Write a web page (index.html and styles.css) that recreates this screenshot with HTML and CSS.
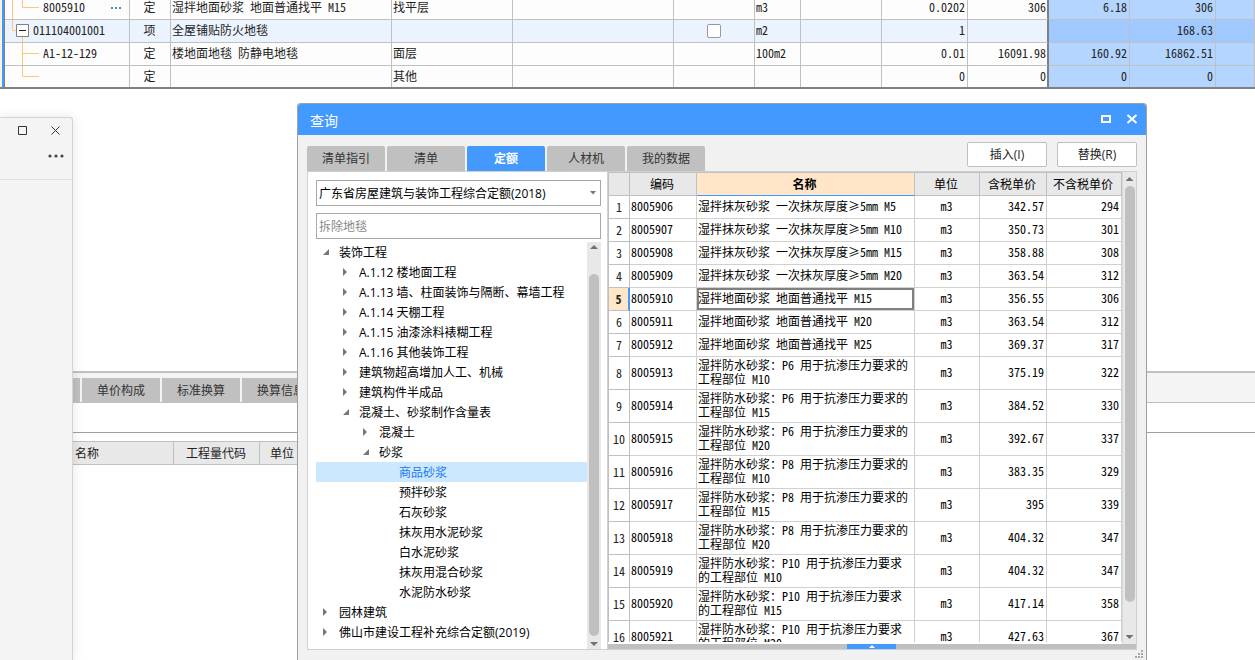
FILE: index.html
```html
<!DOCTYPE html>
<html lang="zh-CN">
<head>
<meta charset="utf-8">
<title>查询</title>
<link rel="stylesheet" href="styles.css">
</head>
<body>
<main class="workspace">
  <section class="bill">
    <div class="bill-gutter"></div>
    <table class="bill-table">
      <colgroup><col class="b-code"><col class="b-kind"><col class="b-name"><col class="b-feature"><col class="b-spec"><col class="b-check"><col class="b-unit"><col class="b-expr"><col class="b-qty"><col class="b-price"><col class="b-cost"><col class="b-total"><col></colgroup>
      <tbody>
        <tr><td><div class="node"><svg class="branch branch-deep" viewBox="0 0 38 23"><path d="M7.5 0V23M17.5 0V10.5H34"/></svg><span>8005910</span><button class="more" aria-label="更多"><svg viewBox="0 0 12 4"><path d="M1 1h2v2H1zM5 1h2v2H5zM9 1h2v2H9z"/></svg></button></div></td><td class="mid">定</td><td>湿拌地面砂浆 地面普通找平 M15</td><td>找平层</td><td></td><td></td><td>m3</td><td></td><td class="num">0.0202</td><td class="num edge">306</td><td class="num hot">6.18</td><td class="num hot">306</td><td class="hot"></td></tr>
        <tr class="active"><td><div class="node"><svg class="branch branch-root" viewBox="0 0 28 23"><path d="M7.5 0V10.5H11M17.5 17V23"/><path class="box" d="M11.5 4.5h12v12h-12z"/><path class="minus" d="M14 10.5h7"/></svg><span>011104001001</span></div></td><td class="mid">项</td><td>全屋铺贴防火地毯</td><td></td><td></td><td class="tick-cell"><input type="checkbox" class="tick" aria-label="全屋铺贴防火地毯"></td><td>m2</td><td></td><td class="num">1</td><td class="edge"></td><td class="hot"></td><td class="num hot">168.63</td><td class="hot"></td></tr>
        <tr><td><div class="node"><svg class="branch branch-deep" viewBox="0 0 38 23"><path d="M17.5 0V23M17.5 10.5H34"/></svg><span>A1-12-129</span></div></td><td class="mid">定</td><td>楼地面地毯 防静电地毯</td><td>面层</td><td></td><td></td><td>100m2</td><td></td><td class="num">0.01</td><td class="num edge">16091.98</td><td class="num hot">160.92</td><td class="num hot">16862.51</td><td class="hot"></td></tr>
        <tr class="last"><td><div class="node"><svg class="branch branch-deep" viewBox="0 0 38 23"><path d="M17.5 0V10.5H34"/></svg></div></td><td class="mid">定</td><td></td><td>其他</td><td></td><td></td><td></td><td></td><td class="num">0</td><td class="num edge">0</td><td class="num hot">0</td><td class="num hot">0</td><td class="hot"></td></tr>
      </tbody>
    </table>
  </section>

  <section class="detail">
    <nav class="detail-tabs"><button>工料机显示</button><button>单价构成</button><button>标准换算</button><button>换算信息</button></nav>
    <div class="detail-bar"></div>
    <table class="detail-table"><thead><tr><th class="d-name">名称</th><th class="d-code">工程量代码</th><th class="d-unit">单位</th></tr></thead></table>
  </section>

  <aside class="side-window">
    <header class="side-head">
      <div class="side-controls">
        <button aria-label="最大化"><svg viewBox="0 0 13 13"><path d="M2.5 2.5h8v8h-8z"/></svg></button>
        <button aria-label="关闭"><svg viewBox="0 0 13 13"><path d="M2.5 2.5l8 8M10.5 2.5l-8 8"/></svg></button>
      </div>
      <button class="side-more" aria-label="菜单"><svg viewBox="0 0 16 4"><circle cx="2" cy="2" r="1.6"/><circle cx="8" cy="2" r="1.6"/><circle cx="14" cy="2" r="1.6"/></svg></button>
    </header>
  </aside>

  <section class="dialog" role="dialog" aria-labelledby="dialog-title">
    <header class="dialog-title">
      <h1 id="dialog-title">查询</h1>
      <button aria-label="最大化"><svg viewBox="0 0 12 12"><path d="M2 2h8v6H2z"/></svg></button>
      <button aria-label="关闭"><svg viewBox="0 0 12 12"><path d="M1.5 1l9 8M10.5 1l-9 8"/></svg></button>
    </header>
    <div class="toolbar">
      <nav class="tabs"><button>清单指引</button><button>清单</button><button class="on">定额</button><button>人材机</button><button>我的数据</button></nav>
      <div class="actions"><button>插入(I)</button><button>替换(R)</button></div>
    </div>
    <div class="panes">
      <div class="library">
        <div class="combo">
          <select aria-label="定额库"><option>广东省房屋建筑与装饰工程综合定额(2018)</option></select>
          <svg viewBox="0 0 6 4"><path d="M0 0h6L3 3.5z"/></svg>
        </div>
        <input class="search" type="text" placeholder="拆除地毯" aria-label="搜索">
        <div class="tree-box">
          <ul class="tree">
            <li class="l0 open">装饰工程</li>
            <li class="l1 shut">A.1.12 楼地面工程</li>
            <li class="l1 shut">A.1.13 墙、柱面装饰与隔断、幕墙工程</li>
            <li class="l1 shut">A.1.14 天棚工程</li>
            <li class="l1 shut">A.1.15 油漆涂料裱糊工程</li>
            <li class="l1 shut">A.1.16 其他装饰工程</li>
            <li class="l1 shut">建筑物超高增加人工、机械</li>
            <li class="l1 shut">建筑构件半成品</li>
            <li class="l1 open">混凝土、砂浆制作含量表</li>
            <li class="l2 shut">混凝土</li>
            <li class="l2 open">砂浆</li>
            <li class="l3 picked">商品砂浆</li>
            <li class="l3">预拌砂浆</li>
            <li class="l3">石灰砂浆</li>
            <li class="l3">抹灰用水泥砂浆</li>
            <li class="l3">白水泥砂浆</li>
            <li class="l3">抹灰用混合砂浆</li>
            <li class="l3">水泥防水砂浆</li>
            <li class="l0 shut">园林建筑</li>
            <li class="l0 shut">佛山市建设工程补充综合定额(2019)</li>
          </ul>
          <div class="scroll tree-scroll"><i class="up"></i><i class="thumb"></i><i class="down"></i></div>
        </div>
      </div>
      <div class="results">
        <div class="results-view">
          <div class="results-clip">
            <table class="grid">
              <colgroup><col class="g-no"><col class="g-code"><col><col class="g-unit"><col class="g-price"><col class="g-net"></colgroup>
              <thead><tr><th></th><th>编码</th><th class="sorted">名称</th><th>单位</th><th>含税单价</th><th>不含税单价</th></tr></thead>
              <tbody>
                <tr><th>1</th><td>8005906</td><td>湿拌抹灰砂浆 一次抹灰厚度<span class="wide">≥</span>5mm M5</td><td>m3</td><td>342.57</td><td>294</td></tr>
                <tr><th>2</th><td>8005907</td><td>湿拌抹灰砂浆 一次抹灰厚度<span class="wide">≥</span>5mm M10</td><td>m3</td><td>350.73</td><td>301</td></tr>
                <tr><th>3</th><td>8005908</td><td>湿拌抹灰砂浆 一次抹灰厚度<span class="wide">≥</span>5mm M15</td><td>m3</td><td>358.88</td><td>308</td></tr>
                <tr><th>4</th><td>8005909</td><td>湿拌抹灰砂浆 一次抹灰厚度<span class="wide">≥</span>5mm M20</td><td>m3</td><td>363.54</td><td>312</td></tr>
                <tr class="current"><th>5</th><td>8005910</td><td>湿拌地面砂浆 地面普通找平 M15</td><td>m3</td><td>356.55</td><td>306</td></tr>
                <tr><th>6</th><td>8005911</td><td>湿拌地面砂浆 地面普通找平 M20</td><td>m3</td><td>363.54</td><td>312</td></tr>
                <tr><th>7</th><td>8005912</td><td>湿拌地面砂浆 地面普通找平 M25</td><td>m3</td><td>369.37</td><td>317</td></tr>
                <tr class="tall"><th>8</th><td>8005913</td><td>湿拌防水砂浆：P6 用于抗渗压力要求的工程部位 M10</td><td>m3</td><td>375.19</td><td>322</td></tr>
                <tr class="tall"><th>9</th><td>8005914</td><td>湿拌防水砂浆：P6 用于抗渗压力要求的工程部位 M15</td><td>m3</td><td>384.52</td><td>330</td></tr>
                <tr class="tall"><th>10</th><td>8005915</td><td>湿拌防水砂浆：P6 用于抗渗压力要求的工程部位 M20</td><td>m3</td><td>392.67</td><td>337</td></tr>
                <tr class="tall"><th>11</th><td>8005916</td><td>湿拌防水砂浆：P8 用于抗渗压力要求的工程部位 M10</td><td>m3</td><td>383.35</td><td>329</td></tr>
                <tr class="tall"><th>12</th><td>8005917</td><td>湿拌防水砂浆：P8 用于抗渗压力要求的工程部位 M15</td><td>m3</td><td>395</td><td>339</td></tr>
                <tr class="tall"><th>13</th><td>8005918</td><td>湿拌防水砂浆：P8 用于抗渗压力要求的工程部位 M20</td><td>m3</td><td>404.32</td><td>347</td></tr>
                <tr class="tall"><th>14</th><td>8005919</td><td>湿拌防水砂浆：P10 用于抗渗压力要求的工程部位 M10</td><td>m3</td><td>404.32</td><td>347</td></tr>
                <tr class="tall"><th>15</th><td>8005920</td><td>湿拌防水砂浆：P10 用于抗渗压力要求的工程部位 M15</td><td>m3</td><td>417.14</td><td>358</td></tr>
                <tr class="tall"><th>16</th><td>8005921</td><td>湿拌防水砂浆：P10 用于抗渗压力要求的工程部位 M20</td><td>m3</td><td>427.63</td><td>367</td></tr>
              </tbody>
            </table>
          </div>
          <div class="scroll grid-scroll"><i class="up"></i><i class="thumb"></i><i class="down"></i></div>
        </div>
        <div class="splitter"><button aria-label="展开"><svg viewBox="0 0 6 3"><path d="M3 0l3 3H0z"/></svg></button></div>
      </div>
    </div>
    <footer class="dialog-foot"><svg viewBox="0 0 8 8"><path d="M6 0h2v2H6zM6 3h2v2H6zM3 3h2v2H3zM6 6h2v2H6zM3 6h2v2H3zM0 6h2v2H0z"/></svg></footer>
  </section>
</main>
</body>
</html>
```

FILE: styles.css
```css
* { box-sizing: border-box; }
body { margin: 0; background: #fff; color: #222; font: 12px/16px "Open Sans", "Noto Sans CJK SC", sans-serif; }
button, input, select { font: inherit; color: inherit; margin: 0; }
button { border: 0; padding: 0; background: none; }
svg { display: block; fill: none; flex: none; }
table { border-collapse: separate; border-spacing: 0; table-layout: fixed; }
.workspace { position: relative; height: 100vh; overflow: hidden; display: flex; flex-direction: column; }
.bill-table, .detail-table, .grid { font-family: "Noto Sans Mono CJK SC", "Noto Sans CJK SC", monospace; }

/* Bill of quantities */
.bill { display: flex; height: 89px; overflow: hidden; flex: none; border-bottom: 2px solid #808080; }
.bill-gutter { width: 5px; flex: none; background: #fdf1e0; border-right: 1px solid #808080; box-shadow: inset -2px 0 #4499ff; }
.bill-table { flex: 1; width: 100%; margin-top: -3px; }
.b-code { width: 125px; } .b-kind { width: 41px; } .b-name { width: 221px; } .b-feature { width: 121px; }
.b-spec { width: 161px; } .b-check { width: 81px; } .b-unit { width: 46px; } .b-expr { width: 81px; }
.b-qty { width: 86px; } .b-price { width: 81px; } .b-cost { width: 81px; } .b-total { width: 86px; }
.bill-table td { height: 23px; padding: 0 2px 2px 1px; line-height: 16px; background: #fdfdfd; border-right: 1px solid #c0c0c0; border-bottom: 1px solid #c0c0c0; white-space: nowrap; overflow: hidden; }
.bill-table .last td { border-bottom-color: transparent; }
.bill-table .active td { background: #ebf3fe; }
.bill-table .hot { background: #b3d5ff; }
.bill-table .active .hot { background: #a0c9ff; }
.bill-table td:first-child, .bill-table .tick-cell { padding: 0; }
.bill-table .mid { text-align: center; padding: 0 1px 2px 0; }
.bill-table .num { text-align: right; }
.bill-table .edge { border-right: 2px solid #808080; padding-right: 1px; }
.node { display: flex; align-items: center; height: 22px; }
.node span { padding-bottom: 2px; }
.branch { height: 23px; stroke: #ffc876; }
.branch-deep { width: 38px; }
.branch-root { width: 28px; }
.branch .box { stroke: #808080; fill: #fff; }
.branch .minus { stroke: #222; }
.more { margin-left: auto; margin-right: 7px; }
.more svg { width: 12px; height: 4px; fill: #3c8ad0; }
.tick { appearance: none; display: block; width: 14px; height: 14px; margin: 0 auto; border: 1px solid #999; border-radius: 2px; background: #fff; }

/* Detail area behind the dialog */
.detail { margin-top: 282px; border-top: 2px solid #c0c0c0; }
.detail-tabs { display: flex; gap: 2px; height: 30px; padding: 5px 0 0 2px; background: #f4f4f4; border-bottom: 1px solid #c0c0c0; }
.detail-tabs button { width: 78px; padding-top: 2px; background: #c0c0c0; color: #333; }
.detail-bar { height: 30px; border-bottom: 1px solid #a0a0a0; }
.detail-table { margin: 8px 0 0 72px; width: 234px; }
.detail-table th { height: 24px; padding: 0 1px 0 0; font-weight: 400; background: #e8e8e8; border: solid #c0c0c0; border-width: 1px 1px 1px 0; }
.detail-table .d-name { width: 102px; text-align: left; padding-left: 3px; }
.detail-table .d-code { width: 86px; }
.detail-table .d-unit { width: 46px; }

/* Small window at the left edge */
.side-window { position: absolute; left: 0; top: 117px; bottom: 0; width: 73px; background: #f4f4f4; border: solid #d4d4d4; border-width: 1px 1px 0 0; border-top-right-radius: 3px; box-shadow: 0 0 12px #0000001c; }
.side-head { display: flex; flex-direction: column; gap: 17px; height: 62px; padding: 6px 8px 0 0; border-bottom: 1px solid #e2e2e2; }
.side-controls { display: flex; justify-content: flex-end; gap: 20px; padding-right: 2px; }
.side-controls svg { width: 13px; height: 13px; stroke: #333; }
.side-more { align-self: flex-end; }
.side-more svg { width: 16px; height: 4px; fill: #444; }

/* Query dialog */
.dialog { position: absolute; left: 297px; top: 103px; bottom: 0; width: 850px; display: flex; flex-direction: column; background: #f1f1f1; border: 1px solid #a0a0a0; border-bottom: 0; border-radius: 4px 4px 0 0; overflow: hidden; }
.dialog-title { display: flex; align-items: center; gap: 14px; height: 31px; padding: 0 8px 0 12px; background: #4499ff; color: #fff; flex: none; }
.dialog-title h1 { margin: 0 auto 0 0; padding-top: 2px; font-size: 14px; line-height: 20px; font-weight: 400; }
.dialog-title svg { width: 12px; height: 12px; stroke: #fff; stroke-width: 2; }
.toolbar { display: flex; justify-content: space-between; height: 36px; padding: 0 9px; flex: none; }
.tabs { display: flex; gap: 2px; padding-top: 11px; }
.tabs button { width: 78px; background: #c0c0c0; color: #333; border-radius: 2px 2px 0 0; }
.tabs .on { background: #4499ff; color: #fff; font-weight: 700; }
.actions { display: flex; gap: 10px; padding-top: 7px; }
.actions button { width: 80px; height: 25px; background: #fff; border: 1px solid #c0c0c0; border-radius: 2px; }
.panes { flex: 1; min-height: 0; margin: 0 9px; display: flex; border: 1px solid #d0d0d0; background: #fff; }
.library { display: flex; flex-direction: column; width: 293px; flex: none; padding: 8px 0 0 8px; }
.combo { position: relative; height: 26px; margin-bottom: 7px; flex: none; color: #000; }
.combo select { appearance: none; width: 100%; height: 100%; padding: 2px 20px 0 2px; border: 1px solid #a8a8a8; border-radius: 0; background: #fff; }
.combo svg { position: absolute; right: 5px; top: 11px; width: 6px; height: 4px; fill: #777; }
.search { height: 26px; padding: 0 2px; border: 1px solid #a8a8a8; border-radius: 0; background: #fff; flex: none; }
.search::placeholder { color: #888; opacity: 1; }
.tree-box { display: flex; flex: 1; min-height: 0; margin-top: 3px; }
.tree { flex: 1; margin: 0; padding: 0; list-style: none; color: #000; overflow: hidden; }
.tree li { display: flex; align-items: center; height: 20px; line-height: 18px; padding-top: 2px; gap: 9px; white-space: nowrap; }
.tree li::before { content: ""; width: 8px; height: 8px; margin-bottom: 2px; flex: none; }
.tree .open::before { background: #777; clip-path: polygon(7px 1px, 7px 7px, 1px 7px); }
.tree .shut::before { background: #777; clip-path: polygon(1px 0, 5px 4px, 1px 8px); }
.l0 { padding-left: 6px; } .l1 { padding-left: 26px; } .l2 { padding-left: 46px; } .l3 { padding-left: 66px; }
.tree .picked { background: #cce8ff; color: #1a7af0; }
.scroll { display: flex; flex-direction: column; align-items: center; background: #e8e8e8; flex: none; }
.scroll .thumb { width: 10px; border-radius: 5px; background: #c0c0c0; flex: 1; }
.scroll .up, .scroll .down { width: 8px; height: 4px; background: #707078; }
.scroll .up { clip-path: polygon(50% 0, 100% 100%, 0 100%); }
.scroll .down { clip-path: polygon(0 0, 100% 0, 50% 100%); }
.tree-scroll { width: 14px; padding: 3px 0; }
.tree-scroll .thumb { margin: 25px 0 6px; }
.results { display: flex; flex-direction: column; flex: 1; min-width: 0; margin-left: 6px; border-left: 1px solid #d0d0d0; }
.results-view { display: flex; flex: 1; min-height: 0; }
.results-clip { flex: 1; min-width: 0; overflow: hidden; border-bottom: 2px solid #fff; }
.grid-scroll { width: 14px; padding: 5px 0; border-left: 1px solid #d8d8d8; }
.grid-scroll .thumb { margin: 5px 0 33px; }
.splitter { display: flex; height: 5px; background: #c0c0c0; padding-left: 239px; flex: none; }
.splitter button { width: 49px; height: 5px; background: #4499ff; }
.splitter svg { width: 6px; height: 3px; margin: 0 auto; fill: #fff; }
.dialog-foot { height: 10px; padding: 0 3px; display: flex; justify-content: flex-end; flex: none; }
.dialog-foot svg { width: 8px; height: 8px; fill: #a8a8a8; }

.grid { width: 100%; color: #000; border-left: 1px solid #c0c0c0; }
.g-no { width: 21px; } .g-code { width: 67px; } .g-unit { width: 65px; } .g-price { width: 67px; } .g-net { width: 75px; }
.grid th { padding: 0; font-weight: 400; }
.grid thead th { height: 24px; padding-right: 2px; background: #e8e8e8; border: solid #c0c0c0; border-width: 1px 1px 1px 0; }
.grid thead .sorted { background: #ffe6c8; font-weight: 700; border-bottom-color: #4499ff; }
.grid tbody th, .grid td { height: 23px; border: solid #d0d0d0; border-width: 0 1px 1px 0; line-height: 14px; }
.grid tbody th { border-color: #c0c0c0; color: #222; }
.grid td { padding: 0 2px 3px 1px; }
.grid .tall th, .grid .tall td { height: 33px; }
.grid td:nth-child(4) { text-align: center; }
.grid td:nth-child(n+5) { text-align: right; }
.grid .current th { background: #ffe6c8; font-weight: 700; border-right: 2px solid #4499ff; }
.grid .current td:nth-child(3) { box-shadow: inset 0 0 0 2px #808080; }
.wide { display: inline-block; width: 12px; text-align: center; }
```
